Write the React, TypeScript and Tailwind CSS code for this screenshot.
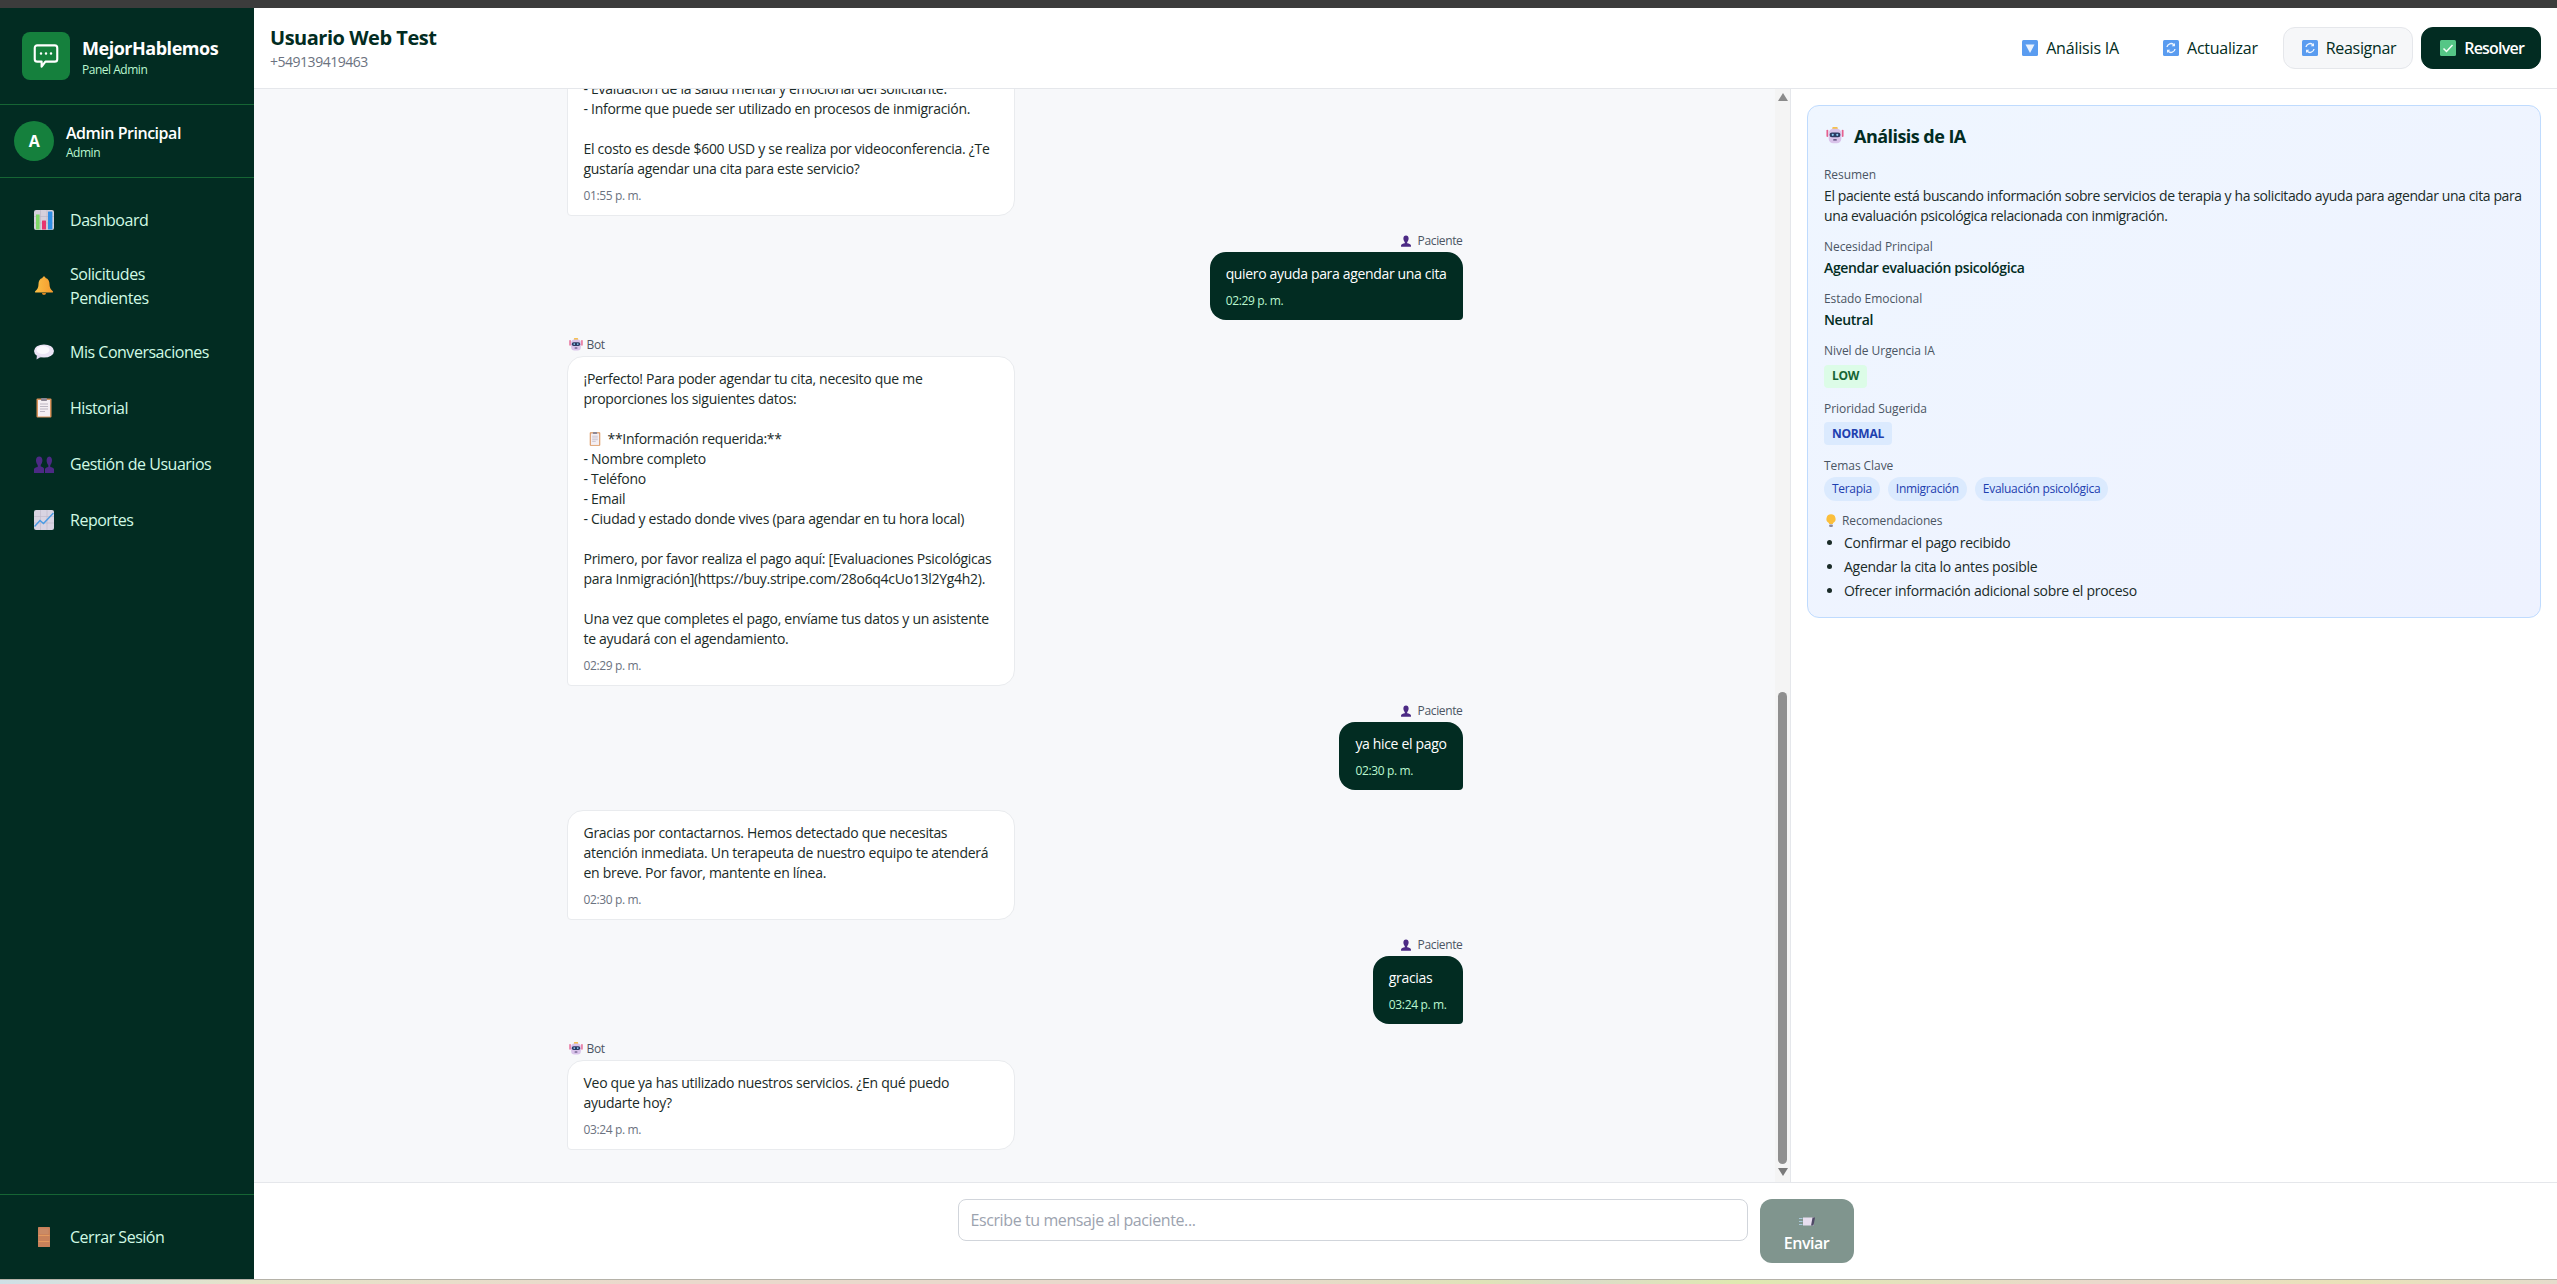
import type { ReactNode } from "react";

type IconProps = { className?: string };

function ChartIcon({ className }: IconProps) {
  return (
    <svg viewBox="0 0 20 20" className={className}>
      <rect x="0" y="0" width="20" height="20" rx="2" fill="#d5d0dc" />
      <path d="M0 6.500h20M0 13h20M6.500 0v20M13 0v20" stroke="#b9b3c4" strokeWidth="0.6" />
      <rect x="2" y="4.500" width="3.600" height="15" fill="#7fd868" />
      <rect x="8" y="10.500" width="4" height="9" rx="0.500" fill="#e8336f" />
      <rect x="14" y="1.500" width="4.400" height="18" rx="0.500" fill="#2f8fe6" />
    </svg>
  );
}

function BellIcon({ className }: IconProps) {
  return (
    <svg viewBox="0 0 20 20" className={className}>
      <defs>
        <linearGradient id="bell" x1="0" y1="0" x2="1" y2="0">
          <stop offset="0" stopColor="#fbbf45" />
          <stop offset="1" stopColor="#f59a2e" />
        </linearGradient>
      </defs>
      <path d="M10 0.500c.9 0 1.400.6 1.500 1.400 2.800.8 4 3.100 4 6 0 3.400 1 5.200 3.300 7.300.6.600.2 1.300-.6 1.300H1.800c-.8 0-1.200-.7-.6-1.300C3.500 13.100 4.500 11.300 4.500 7.900c0-2.900 1.200-5.200 4-6 .1-.8.600-1.400 1.500-1.400z" fill="url(#bell)" />
      <path d="M8 17h4c0 1.300-.9 2-2 2s-2-.7-2-2z" fill="#e08a25" />
    </svg>
  );
}

function SpeechIcon({ className }: IconProps) {
  return (
    <svg viewBox="0 0 20 20" className={className}>
      <ellipse cx="10" cy="9" rx="10" ry="6.600" fill="#ebe4f5" />
      <ellipse cx="9" cy="8" rx="6.500" ry="4" fill="#fbf9fe" />
      <path d="M3 13l-.5 4.500 5-3z" fill="#ded5ec" />
    </svg>
  );
}

function ClipboardIcon({ className }: IconProps) {
  return (
    <svg viewBox="0 0 20 20" className={className}>
      <rect x="2.500" y="0.500" width="15" height="19" rx="1" fill="#d9925a" />
      <rect x="4" y="2" width="12" height="16.500" fill="#f4eff3" />
      <rect x="7" y="0" width="6" height="3" rx="0.800" fill="#8d8794" />
      <path d="M6 6h8M6 8.500h8M6 11h8M6 13.500h5" stroke="#b6b0bd" strokeWidth="0.900" />
    </svg>
  );
}

function UsersIcon({ className }: IconProps) {
  return (
    <svg viewBox="0 0 20 20" className={className} fill="#4c2a85">
      <path d="M5.200 2.500c2 0 3.200 1.600 3.200 3.800 0 2-.8 3.700-1.700 4.600v1.600c1.600.4 2.800 1 3.300 2V19H0v-4c.5-1 1.700-1.600 3.700-2v-1.900C2.800 10.100 2 8.400 2 6.300c0-2.200 1.200-3.800 3.200-3.800z" />
      <path d="M14.800 2.500c2 0 3.200 1.600 3.200 3.800 0 2.100-.8 3.800-1.700 4.800V13c2 .4 3.200 1 3.700 2v4h-9v-4c.4-1 1.500-1.600 3.300-2v-1.900c-1-1-1.700-2.700-1.700-4.800 0-2.200 1.200-3.800 3.200-3.800z" />
    </svg>
  );
}

function TrendIcon({ className }: IconProps) {
  return (
    <svg viewBox="0 0 20 20" className={className}>
      <rect width="20" height="20" rx="2" fill="#d9d4e2" />
      <path d="M0 6.500h20M0 13h20M6.500 0v20M13 0v20" stroke="#bdb7c9" strokeWidth="0.600" />
      <path d="M0.500 16.500L6 10.500l3.500 3L19.500 3" fill="none" stroke="#4a9be3" strokeWidth="1.500" />
    </svg>
  );
}

function DoorIcon({ className }: IconProps) {
  return (
    <svg viewBox="0 0 20 20" className={className}>
      <rect x="4" y="0" width="12" height="20" rx="0.600" fill="#c8815a" />
      <path d="M4.500 8.500h11M4.500 14.500h11" stroke="#e49a5f" strokeWidth="1" />
      <rect x="5.500" y="1.500" width="9" height="5.500" fill="#c98a66" />
    </svg>
  );
}

function DownIcon({ className }: IconProps) {
  return (
    <svg viewBox="0 0 16 16" className={className}>
      <rect width="16" height="16" rx="1.500" fill="#5a9cf0" />
      <path d="M3.500 4.500h9L8 13z" fill="#e9f2fe" />
    </svg>
  );
}

function RefreshIcon({ className }: IconProps) {
  return (
    <svg viewBox="0 0 16 16" className={className}>
      <rect width="16" height="16" rx="1.500" fill="#5a9cf0" />
      <path d="M4 7a4 4 0 0 1 6.800-2.200M12 9a4 4 0 0 1-6.800 2.200" fill="none" stroke="#eef5ff" strokeWidth="1.400" />
      <path d="M12 3v3.300H8.700zM4 13V9.700h3.300z" fill="#eef5ff" />
    </svg>
  );
}

function CheckIcon({ className }: IconProps) {
  return (
    <svg viewBox="0 0 16 16" className={className}>
      <rect width="16" height="16" rx="1.500" fill="#55c686" />
      <path d="M3.500 8.500l3 3 6-6.500" fill="none" stroke="#f4fff8" strokeWidth="1.500" />
    </svg>
  );
}

function RobotIcon({ className }: IconProps) {
  return (
    <svg viewBox="0 0 20 20" className={className}>
      <rect x="0.500" y="3" width="2" height="8" rx="1" fill="#e5608f" />
      <rect x="17.500" y="3" width="2" height="8" rx="1" fill="#e5608f" />
      <rect x="7" y="0" width="6" height="3" rx="1" fill="#f5c04e" />
      <rect x="3" y="2" width="14" height="16" rx="5" fill="#d9c3ea" />
      <rect x="4" y="6" width="12" height="5.500" rx="2.500" fill="#2c3a63" />
      <circle cx="7.500" cy="8.700" r="1.200" fill="#8fd0f5" />
      <circle cx="12.500" cy="8.700" r="1.200" fill="#8fd0f5" />
      <rect x="8" y="13.500" width="4" height="1.600" rx="0.600" fill="#4a3d6b" />
    </svg>
  );
}

function BulbIcon({ className }: IconProps) {
  return (
    <svg viewBox="0 0 20 20" className={className}>
      <path d="M10 0.500a6.500 6.500 0 0 1 3.500 12c-.5.400-.8 1-.8 1.800H7.300c0-.8-.3-1.400-.8-1.800A6.500 6.500 0 0 1 10 .5z" fill="#fbbf3c" />
      <rect x="7.500" y="15" width="5" height="3.500" rx="1" fill="#8f8a99" />
    </svg>
  );
}

function PersonIcon({ className }: IconProps) {
  return (
    <svg viewBox="0 0 16 16" className={className} fill="#4c2a85">
      <path d="M8 0.500c2.200 0 3.500 1.700 3.500 4 0 2.100-.9 3.800-1.900 4.800v1.600c2.600.4 4.400 1.300 5 2.600v2H1.400v-2c.6-1.300 2.400-2.200 5-2.600V9.300c-1-1-1.900-2.700-1.900-4.800 0-2.300 1.300-4 3.500-4z" />
    </svg>
  );
}

function EnvelopeIcon({ className }: IconProps) {
  return (
    <svg viewBox="0 0 16 9" className={className}>
      <rect x="4" y="0.500" width="11" height="8" fill="#e8deef" />
      <path d="M0 1.500h3.500M0 4.500h3.500M0 7.500h3.500" stroke="#a9c9dc" strokeWidth="1" />
      <path d="M13.500 0.500H16L14.500 8.500H12z" fill="#4f4a66" />
    </svg>
  );
}

const navItems: { label: string; icon: ReactNode }[] = [
  { label: "Dashboard", icon: <ChartIcon className="size-5" /> },
  { label: "Solicitudes Pendientes", icon: <BellIcon className="size-5" /> },
  { label: "Mis Conversaciones", icon: <SpeechIcon className="size-5" /> },
  { label: "Historial", icon: <ClipboardIcon className="size-5" /> },
  { label: "Gestión de Usuarios", icon: <UsersIcon className="size-5" /> },
  { label: "Reportes", icon: <TrendIcon className="size-5" /> },
];

function NavItem({ label, icon }: { label: string; icon: ReactNode }) {
  return (
    <div className="flex items-center gap-3.5 rounded-lg px-4 py-3 text-base text-[#d1fae5]">
      <span className="flex h-7 w-6 shrink-0 items-center justify-center">{icon}</span>
      <span>{label}</span>
    </div>
  );
}

function Sidebar() {
  return (
    <aside className="flex w-[254px] shrink-0 flex-col bg-[#022c22] tracking-[-0.03em]">
      <div className="flex items-center gap-3 border-b border-[#166534] px-[22px] py-6">
        <div className="flex size-12 items-center justify-center rounded-lg bg-[#15803d]">
          <svg viewBox="0 0 24 24" className="size-[30px]" fill="none" stroke="white" strokeWidth="1.700" strokeLinejoin="round">
            <path d="M5 3.500h14a2 2 0 0 1 2 2v9a2 2 0 0 1-2 2h-7.500L8.500 20.500v-4H5a2 2 0 0 1-2-2v-9a2 2 0 0 1 2-2z" />
            <path d="M8 10h.01M12 10h.01M16 10h.01" strokeWidth="2" strokeLinecap="round" />
          </svg>
        </div>
        <div>
          <div className="text-lg leading-7 font-bold text-white">MejorHablemos</div>
          <div className="text-xs leading-4 text-[#bbf7d0]">Panel Admin</div>
        </div>
      </div>
      <div className="flex items-center gap-3 border-b border-[#166534] px-3.5 py-4">
        <div className="flex size-10 items-center justify-center rounded-full bg-[#15803d] text-base font-bold text-white">A</div>
        <div>
          <div className="text-base leading-6 font-semibold text-white">Admin Principal</div>
          <div className="text-xs leading-4 text-[#bbf7d0]">Admin</div>
        </div>
      </div>
      <nav className="flex flex-1 flex-col gap-1 p-4">
        {navItems.map((item) => (
          <NavItem key={item.label} label={item.label} icon={item.icon} />
        ))}
      </nav>
      <div className="border-t border-[#166534] p-4">
        <NavItem label="Cerrar Sesión" icon={<DoorIcon className="size-5" />} />
      </div>
    </aside>
  );
}

function HeaderButton({ icon, label, className }: { icon: ReactNode; label: string; className: string }) {
  return (
    <button className={`flex h-[42px] items-center gap-1.5 rounded-xl border px-4 text-base ${className}`}>
      <span className="flex w-5 justify-center">{icon}</span>
      {label}
    </button>
  );
}

function Header() {
  return (
    <header className="flex items-center justify-between border-b border-[#e5e7eb] bg-white py-4 pr-4 pl-4">
      <div className="tracking-[-0.03em]">
        <h1 className="text-xl leading-7 font-bold text-[#022c22]">Usuario Web Test</h1>
        <p className="text-sm leading-5 text-[#6b7280]">+549139419463</p>
      </div>
      <div className="flex items-center gap-2">
        <HeaderButton icon={<DownIcon className="size-4" />} label="Análisis IA" className="border-transparent font-medium tracking-[-0.012em] text-[#022c22]" />
        <HeaderButton icon={<RefreshIcon className="size-4" />} label="Actualizar" className="border-transparent font-medium tracking-[-0.015em] text-[#022c22]" />
        <HeaderButton icon={<RefreshIcon className="size-4" />} label="Reasignar" className="border-[#e5e7eb] bg-[#f6f7f9] font-medium tracking-[-0.02em] text-[#022c22]" />
        <HeaderButton icon={<CheckIcon className="size-4" />} label="Resolver" className="border-[#022c22] bg-[#022c22] font-semibold tracking-[-0.05em] text-white" />
      </div>
    </header>
  );
}

type Message = {
  from: "bot" | "user" | "system";
  text: ReactNode;
  time: string;
};

const messages: Message[] = [
  {
    from: "bot",
    text: "- Evaluación de la salud mental y emocional del solicitante.\n- Informe que puede ser utilizado en procesos de inmigración.\n\nEl costo es desde $600 USD y se realiza por videoconferencia. ¿Te\ngustaría agendar una cita para este servicio?",
    time: "01:55 p. m.",
  },
  { from: "user", text: "quiero ayuda para agendar una cita", time: "02:29 p. m." },
  {
    from: "bot",
    text: (
      <>
        {"¡Perfecto! Para poder agendar tu cita, necesito que me\nproporciones los siguientes datos:\n\n"}
        <ClipboardIcon className="mr-1.5 ml-1 inline size-[14px] align-[-2px]" />
        {"**Información requerida:**\n- Nombre completo\n- Teléfono\n- Email\n- Ciudad y estado donde vives (para agendar en tu hora local)\n\nPrimero, por favor realiza el pago aquí: [Evaluaciones Psicológicas\npara Inmigración](https://buy.stripe.com/28o6q4cUo13l2Yg4h2).\n\nUna vez que completes el pago, envíame tus datos y un asistente\nte ayudará con el agendamiento."}
      </>
    ),
    time: "02:29 p. m.",
  },
  { from: "user", text: "ya hice el pago", time: "02:30 p. m." },
  {
    from: "system",
    text: "Gracias por contactarnos. Hemos detectado que necesitas\natención inmediata. Un terapeuta de nuestro equipo te atenderá\nen breve. Por favor, mantente en línea.",
    time: "02:30 p. m.",
  },
  { from: "user", text: "gracias", time: "03:24 p. m." },
  {
    from: "bot",
    text: "Veo que ya has utilizado nuestros servicios. ¿En qué puedo\nayudarte hoy?",
    time: "03:24 p. m.",
  },
];

function ChatMessage({ message }: { message: Message }) {
  if (message.from === "user") {
    return (
      <div className="flex shrink-0 flex-col items-end">
        <div className="mb-1 flex h-4 items-center gap-1.5 pt-0.5 text-xs leading-4 tracking-[-0.03em] text-[#4b5563]">
          <PersonIcon className="size-3" />
          Paciente
        </div>
        <div className="rounded-2xl rounded-br-sm bg-[#022c22] px-4 py-3 text-sm leading-5 tracking-[-0.024em] text-white">
          <p>{message.text}</p>
          <p className="mt-[10px] text-xs leading-[14px] tracking-[-0.03em] text-[#bbf7d0]">{message.time}</p>
        </div>
      </div>
    );
  }
  return (
    <div className="flex shrink-0 flex-col items-start">
      {message.from === "bot" ? (
        <div className="mb-1 flex h-4 items-center gap-1 pt-0.5 pl-0.5 text-xs leading-4 tracking-[-0.03em] text-[#4b5563]">
          <RobotIcon className="size-3.5" />
          Bot
        </div>
      ) : (
        <div className="mb-1" />
      )}
      <div className="w-[448px] rounded-2xl rounded-bl-sm border border-[#e9ebee] bg-white px-4 py-3 text-sm leading-5 text-[#1a2b28]">
        <p className="whitespace-pre-line">{message.text}</p>
        <p className="mt-[10px] text-xs leading-[14px] tracking-[-0.03em] text-[#6b7280]">{message.time}</p>
      </div>
    </div>
  );
}

function ScrollTrack() {
  return (
    <div className="flex w-[15px] shrink-0 flex-col items-center bg-[#f4f4f4] pt-1 pb-1.5">
      <svg viewBox="0 0 10 8" className="w-2.5"><path d="M5 0l5 8H0z" fill="#8a8a8a" /></svg>
      <div className="flex-1" />
      <div className="h-[472px] w-[9px] rounded-full bg-[#8f8f8f]" />
      <svg viewBox="0 0 10 8" className="mt-1 w-2.5"><path d="M5 8L0 0h10z" fill="#7a7a7a" /></svg>
    </div>
  );
}

function Chat() {
  return (
    <section className="flex min-w-0 flex-1 bg-[#f7f8fa] tracking-[-0.018em]">
      <div className="flex min-w-0 flex-1 flex-col justify-end overflow-hidden pb-8">
        <div className="mx-auto flex w-[896px] shrink-0 flex-col gap-4">
          {messages.map((message, i) => (
            <ChatMessage key={i} message={message} />
          ))}
        </div>
      </div>
      <ScrollTrack />
    </section>
  );
}

function Label({ children }: { children: ReactNode }) {
  return <p className="mb-[3px] pt-px text-xs leading-4 tracking-[-0.005em] text-[#4b5563]">{children}</p>;
}

function AnalysisPanel() {
  return (
    <aside className="w-[767px] shrink-0 border-l border-[#e5e7eb] bg-white p-4 tracking-[-0.018em]">
      <div className="rounded-xl border border-[#bfdbfe] bg-gradient-to-br from-[#eff6ff] to-[#eef2ff] p-4 text-[#022c22]">
        <h2 className="mb-4 flex items-center gap-2.5 text-lg leading-7 font-bold tracking-[-0.03em]">
          <RobotIcon className="ml-0.5 size-[18px]" />
          Análisis de IA
        </h2>
        <div className="flex flex-col gap-3">
          <div>
            <Label>Resumen</Label>
            <p className="text-sm leading-5 tracking-[-0.028em] text-[#1a2b28]">
              El paciente está buscando información sobre servicios de terapia y ha solicitado ayuda para agendar una cita para una evaluación psicológica relacionada con inmigración.
            </p>
          </div>
          <div>
            <Label>Necesidad Principal</Label>
            <p className="text-sm leading-5 font-semibold tracking-[-0.025em]">Agendar evaluación psicológica</p>
          </div>
          <div>
            <Label>Estado Emocional</Label>
            <p className="text-sm leading-5 font-semibold tracking-[-0.025em]">Neutral</p>
          </div>
          <div>
            <Label>Nivel de Urgencia IA</Label>
            <span className="inline-flex rounded bg-[#dcfce7] px-2 py-[3.5px] text-xs leading-4 font-bold text-[#166534]">LOW</span>
          </div>
          <div>
            <Label>Prioridad Sugerida</Label>
            <span className="inline-flex rounded bg-[#dbeafe] px-2 py-[3.5px] text-xs leading-4 font-bold text-[#1e40af]">NORMAL</span>
          </div>
          <div>
            <Label>Temas Clave</Label>
            <div className="flex gap-2">
              {["Terapia", "Inmigración", "Evaluación psicológica"].map((tema) => (
                <span key={tema} className="rounded-full bg-[#dbeafe] px-2 py-1 text-xs leading-4 tracking-[-0.025em] text-[#1e40af]">{tema}</span>
              ))}
            </div>
          </div>
          <div>
            <div className="mb-1 flex items-center gap-1 text-xs leading-4 tracking-[-0.01em] text-[#4b5563]">
              <BulbIcon className="size-3.5" />
              Recomendaciones
            </div>
            <ul className="flex list-disc flex-col gap-1 pl-5 text-sm leading-5 text-[#1a2b28]">
              <li>Confirmar el pago recibido</li>
              <li>Agendar la cita lo antes posible</li>
              <li>Ofrecer información adicional sobre el proceso</li>
            </ul>
          </div>
        </div>
      </div>
    </aside>
  );
}

function Composer() {
  return (
    <div className="border-t border-[#e5e7eb] bg-white py-4">
      <div className="mx-auto flex w-[896px] items-start gap-3">
        <input
          readOnly
          placeholder="Escribe tu mensaje al paciente..."
          className="h-[42px] flex-1 rounded-lg border border-[#d1d5db] bg-white px-3 text-base tracking-[-0.025em] placeholder:text-[#9ca3af]"
        />
        <button className="flex h-16 w-[94px] flex-col items-center justify-center gap-1.5 rounded-xl bg-[#80958e] pt-2 text-base leading-[22px] font-semibold tracking-[-0.03em] text-white">
          <EnvelopeIcon className="h-[9px] w-4" />
          Enviar
        </button>
      </div>
    </div>
  );
}

export default function App() {
  return (
    <div className="flex h-screen flex-col overflow-hidden bg-white font-['Open_Sans',sans-serif]">
      <div className="h-2 shrink-0 bg-[#3c3c3c]" />
      <div className="flex min-h-0 flex-1">
        <Sidebar />
        <main className="flex min-w-0 flex-1 flex-col">
          <Header />
          <div className="flex min-h-0 flex-1">
            <Chat />
            <AnalysisPanel />
          </div>
          <Composer />
        </main>
      </div>
      <div className="h-[5px] shrink-0 border-t border-[#b5b2a8] bg-[linear-gradient(90deg,#cfe0e6_0%,#e6e3c8_10%,#ead9cc_25%,#e8d9cc_50%,#dfe3b8_58%,#dcdcc8_62%,#dfe9b0_68%,#ead9cc_82%,#e9e2b8_92%,#e6dccc_100%)]" />
    </div>
  );
}
